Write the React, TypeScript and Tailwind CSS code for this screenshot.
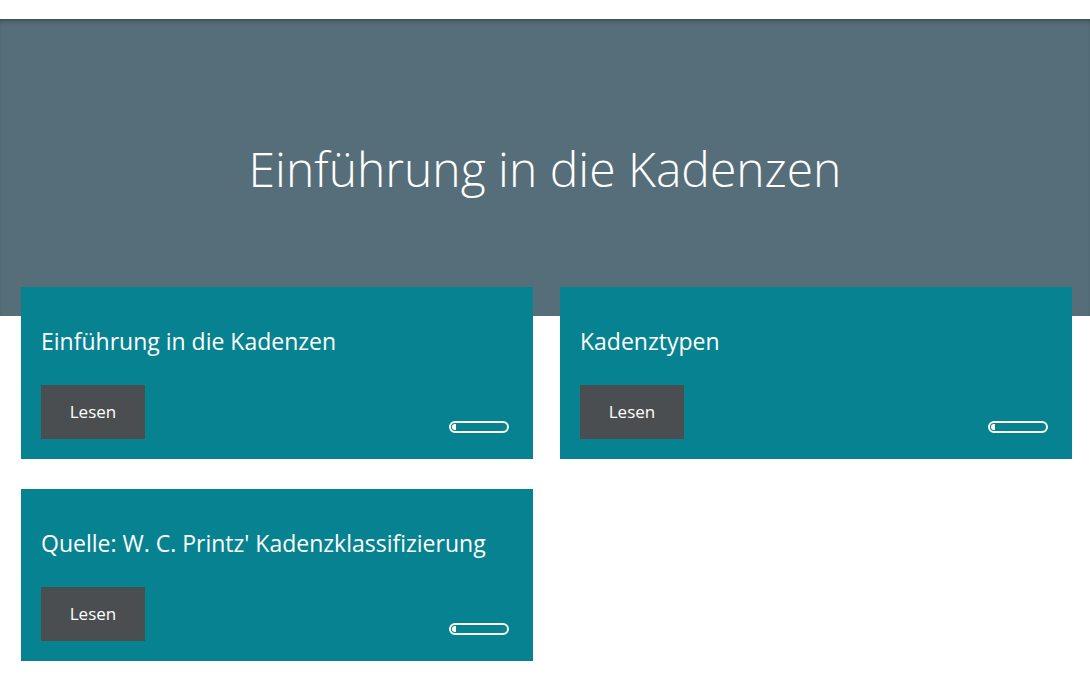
import React from "react";

const cards = [
  "Einführung in die Kadenzen",
  "Kadenztypen",
  "Quelle: W. C. Printz' Kadenzklassifizierung",
];

function Progress() {
  return (
    <div className="w-[60px] h-[12px] rounded-full border-2 border-white p-[1px] flex items-center">
      <div className="w-[4px] h-[6px] bg-white rounded-l-full" />
    </div>
  );
}

function Card({ title }: { title: string }) {
  return (
    <div className="bg-[#078290] h-[172px] px-5 pt-[38px] pb-5 flex flex-col">
      <h3 className="text-white text-[23px] leading-[32px] font-normal">{title}</h3>
      <div className="mt-[28px] flex items-end justify-between">
        <button className="w-[104px] h-[54px] bg-[#4b4e50] text-white text-[17px]">Lesen</button>
        <div className="mb-[6px] mr-1">
          <Progress />
        </div>
      </div>
    </div>
  );
}

export default function App() {
  return (
    <div className="w-[1090px] h-[682px] bg-white overflow-hidden" style={{ fontFamily: '"Open Sans", sans-serif' }}>
      <div className="h-[19px]" />
      <div className="h-[297px] bg-[#566e7a] shadow-[inset_0_4px_4px_-2px_rgba(0,0,0,0.3)] flex justify-center pt-[118px]">
        <h1 className="text-white text-[48px] leading-[64px] font-light">Einführung in die Kadenzen</h1>
      </div>
      <div className="-mt-[29px] px-[21px] grid grid-cols-2 gap-x-[27px] gap-y-[30px] w-[1093px]">
        {cards.map((c) => (
          <Card key={c} title={c} />
        ))}
      </div>
    </div>
  );
}
